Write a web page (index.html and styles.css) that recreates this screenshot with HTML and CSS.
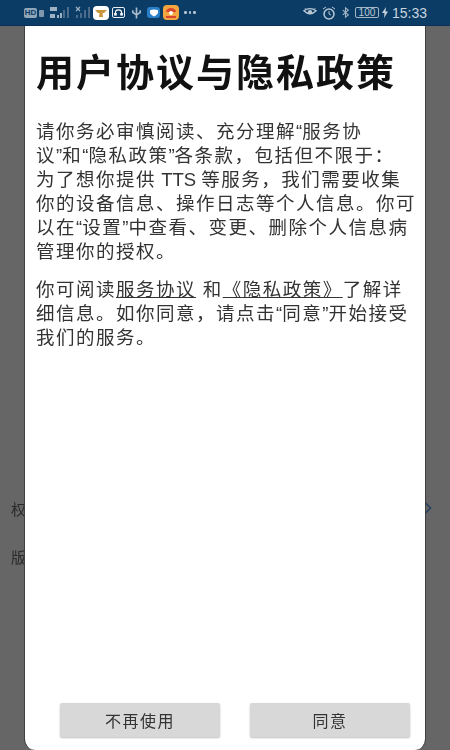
FILE: index.html
```html
<!DOCTYPE html>
<html lang="zh">
<head>
<meta charset="utf-8">
<title>用户协议与隐私政策</title>
<link rel="stylesheet" href="styles.css">
</head>
<body>
<header class="status">
  <div class="status-left">
    <span class="hd">HD</span>
    <svg class="ic b-ic" width="6" height="10" viewBox="0 0 6 10"><rect x="0" y="2" width="5" height="7" rx="1" fill="#7f98ae"/></svg>
    <svg class="ic sig" width="22" height="14" viewBox="0 0 22 14"><g fill="#9fb2c3"><rect x="1" y="1" width="7" height="4"/><rect x="1" y="8" width="5" height="4"/><rect x="8" y="9" width="2" height="3"/><rect x="11" y="7" width="2" height="5"/></g><g fill="#4a6c8a"><rect x="14" y="4" width="2" height="8"/><rect x="18" y="1" width="2" height="11"/></g></svg>
    <svg class="ic xsig" width="16" height="14" viewBox="0 0 16 14"><path d="M1 1l4 4M5 1L1 5" stroke="#9fb2c3" stroke-width="1.200"/><g fill="#4a6c8a"><rect x="1" y="9" width="2" height="3"/><rect x="5" y="7" width="2" height="5"/><rect x="9" y="4" width="2" height="8"/><rect x="13" y="1" width="2" height="11"/></g></svg>
    <span class="app app-white"><svg width="12" height="10" viewBox="0 0 12 10"><path d="M0 2h12L9 5H7.500L8 9H4l.5-4H3z" fill="#c8963c"/></svg></span>
    <span class="app app-navy"><svg width="9" height="7" viewBox="0 0 10 8"><path d="M1.500 6V4a3.500 3 0 0 1 7 0v2" fill="none" stroke="#fff" stroke-width="1.200"/><rect x="0" y="4.500" width="3" height="3" fill="#fff"/><rect x="7" y="4.500" width="3" height="3" fill="#fff"/></svg></span>
    <svg class="ic usb" width="11" height="14" viewBox="0 0 12 14"><path d="M6 1v12M2 4v2.500l4 2.500 4-2.500V4" fill="none" stroke="#a9bccb" stroke-width="1.800"/></svg>
    <span class="app app-blue"><svg width="10" height="8" viewBox="0 0 11 9"><path d="M1 1.500q4.500-2 9 0v3Q8 8 5.500 8.500 3 8 1 4.500z" fill="#fff"/></svg></span>
    <span class="app app-orange"><svg width="12" height="11" viewBox="0 0 12 11"><path d="M1 5a5 4 0 0 1 10 0z" fill="#d8452f"/><circle cx="6" cy="6" r="2" fill="#fff"/><rect x="1" y="9" width="10" height="2" fill="#d8452f"/></svg></span>
    <span class="dots"><i></i><i></i><i></i></span>
  </div>
  <div class="status-right">
    <svg width="14" height="11" viewBox="0 0 16 12"><path d="M1 4q7-5 14 0q-7 7-14 0z" fill="none" stroke="#b8c7d4" stroke-width="1.500"/><circle cx="8" cy="5.500" r="2.500" fill="#b8c7d4"/><path d="M2 1l2 2M14 1l-2 2" stroke="#b8c7d4"/></svg>
    <svg class="clock" width="14" height="14" viewBox="0 0 14 14"><circle cx="7" cy="8" r="5" fill="none" stroke="#b8c7d4" stroke-width="1.500"/><path d="M7 5v3l2 1M1 3l3-2M13 3l-3-2" fill="none" stroke="#b8c7d4"/></svg>
    <svg class="bt" width="7" height="13" viewBox="0 0 9 14"><path d="M1 4l7 6-3.500 3V1L8 4 1 10" fill="none" stroke="#a3b6c6" stroke-width="1.400"/></svg>
    <span class="battery">100</span>
    <svg class="bolt" width="6" height="11" viewBox="0 0 6 11"><path d="M4 0L0 6h2.500L2 11l4-6.500H3.500z" fill="#c5d2dc"/></svg>
    <span class="time">15:33</span>
  </div>
</header>
<main class="screen">
  <div class="behind">
    <div class="behind-row"><span>权</span><svg class="chev" width="8" height="12" viewBox="0 0 8 14"><path d="M1 1l6 6-6 6" fill="none" stroke="#1f3f63" stroke-width="1.600"/></svg></div>
    <div class="behind-row"><span>版</span></div>
  </div>
  <section class="dialog">
    <h1 class="title">用户协议与隐私政策</h1>
    <p class="para">请你务必审慎阅读、充分理解<span class="tight">“</span>服务协<br>议<span class="tight">”</span>和<span class="tight">“</span>隐私政策<span class="tight">”</span>各条款，包括但不限于：<br>为了想你提供<span class="tight"> TTS </span>等服务，我们需要收集<br>你的设备信息、操作日志等个人信息。你可<br>以在<span class="tight">“</span>设置<span class="tight">”</span>中查看、变更、删除个人信息病<br>管理你的授权。</p>
    <p class="para">你可阅读<span class="link">服务协议</span> 和<span class="link">《隐私政策》</span>了解详<br>细信息。如你同意，请点击<span class="tight">“</span>同意<span class="tight">”</span>开始接受<br>我们的服务。</p>
    <div class="actions">
      <button class="btn">不再使用</button>
      <button class="btn">同意</button>
    </div>
  </section>
</main>
</body>
</html>
```
FILE: styles.css
```css
* { box-sizing: border-box; }
html, body { margin: 0; height: 100%; }
body {
  width: 450px;
  height: 750px;
  overflow: hidden;
  display: flex;
  flex-direction: column;
  font-family: "Liberation Sans", "Noto Sans CJK SC", sans-serif;
  background: #666;
  filter: blur(0.35px);
}
.status {
  height: 26px;
  flex: none;
  display: flex;
  justify-content: space-between;
  align-items: center;
  background: #0b3c66;
  border-bottom: 1px solid #0a2f52;
  padding: 0 23px 0 24px;
}
.status-left, .status-right { display: flex; align-items: center; }
.hd {
  width: 13px;
  height: 10px;
  border-radius: 2px;
  background: #8fa5b8;
  color: #0b3c66;
  font: bold 8px/10px "Liberation Sans", sans-serif;
  text-align: center;
}
.ic { display: block; }
.b-ic { margin-left: 2px; }
.sig { margin-left: 4px; }
.xsig { margin-left: 4px; }
.usb { margin-left: 6px; }
.app {
  display: flex;
  align-items: center;
  justify-content: center;
}
.app-white {
  width: 16px;
  height: 14px;
  margin-left: 2px;
  border-radius: 4px;
  background: #fff;
}
.app-navy {
  width: 13px;
  height: 11px;
  margin-left: 3px;
  border: 1.500px solid #e8eef3;
  border-radius: 2px;
  background: #0b3c66;
}
.app-blue {
  width: 13px;
  height: 11px;
  margin-left: 5px;
  border-radius: 3px;
  background: #2a7fc9;
}
.app-orange {
  width: 16px;
  height: 15px;
  margin-left: 3px;
  border-radius: 4px;
  background: #f3a53f;
}
.dots { display: flex; gap: 2px; margin-left: 5px; }
.dots i { width: 2.500px; height: 2.500px; border-radius: 50%; background: #b5c5d2; }
.clock { margin-left: 5px; }
.bt { margin-left: 6px; }
.battery {
  width: 24px;
  height: 11px;
  margin-left: 6px;
  border: 1px solid #a3b6c6;
  border-radius: 2px;
  color: #b8c7d4;
  font: 10px/9px "Liberation Sans", sans-serif;
  text-align: center;
}
.bolt { margin-left: 3px; }
.time {
  margin-left: 4px;
  color: #c9d5df;
  font: 14px/16px "Liberation Sans", sans-serif;
}
.screen {
  flex: 1;
  position: relative;
  display: flex;
  justify-content: center;
}
.behind {
  position: absolute;
  inset: 0;
  padding: 458px 0 0 0;
}
.behind-row {
  height: 48px;
  display: flex;
  align-items: center;
  justify-content: space-between;
  padding: 0 18px 0 11px;
  color: #2b2b2b;
  font-size: 15px;
}
.dialog {
  position: relative;
  width: 402px;
  display: flex;
  flex-direction: column;
  background: #fff;
  border-left: 1px solid #3f3f3f;
  border-right: 1px solid #3f3f3f;
  border-radius: 0 0 11px 11px;
  padding: 20px 15px 13px 11px;
}
.title {
  margin: 0 0 20px;
  font-size: 38px;
  line-height: 54px;
  font-weight: 700;
  color: #111;
  letter-spacing: 2px;
  white-space: nowrap;
}
.para {
  margin: 0 0 14px;
  font-size: 18.500px;
  line-height: 24px;
  color: #333;
  letter-spacing: 1.500px;
  white-space: nowrap;
}
.tight { letter-spacing: 0; }
.link { text-decoration: underline; }
.actions {
  margin-top: auto;
  display: flex;
  justify-content: space-between;
  padding-left: 24px;
}
.btn {
  width: 160px;
  height: 34px;
  border: 0;
  border-radius: 2px;
  background: #d8d8d8;
  box-shadow: 0 1px 2px rgba(0, 0, 0, .25);
  color: #333;
  font: 16px "Noto Sans CJK SC", sans-serif;
  letter-spacing: 1.500px;
}
```
